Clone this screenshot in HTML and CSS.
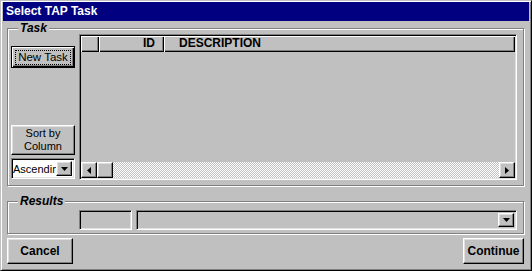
FILE: index.html
```html
<!DOCTYPE html>
<html>

<head>
    <meta charset="utf-8">
    <title>Select TAP Task</title>
    <link rel="stylesheet" href="styles.css">
</head>

<body>
    <div class="window">
        <div class="titlebar">Select TAP Task</div>

        <div class="group group-task">
            <span class="group-label">Task</span>
            <div class="task-side">
                <button class="btn btn-default"><span class="focus">New Task</span></button>
                <div class="side-bottom">
                    <button class="btn btn-sort">Sort by<br>Column</button>
                    <div class="combo combo-white">
                        <span class="combo-text">Ascending</span>
                        <span class="btn combo-arrow">
                            <svg width="7" height="4" viewBox="0 0 7 4"><polygon points="0,0 7,0 3.5,4" fill="#000"/></svg>
                        </span>
                    </div>
                </div>
            </div>
            <div class="listview">
                <div class="lv-header">
                    <div class="lv-col lv-col-blank"></div>
                    <div class="lv-col lv-col-id">ID</div>
                    <div class="lv-col lv-col-desc">DESCRIPTION</div>
                </div>
                <div class="lv-body"></div>
                <div class="hscroll">
                    <span class="btn sb-btn">
                        <svg width="4" height="7" viewBox="0 0 4 7"><polygon points="4,0 4,7 0,3.5" fill="#000"/></svg>
                    </span>
                    <span class="btn sb-btn"></span>
                    <span class="sb-track"></span>
                    <span class="btn sb-btn">
                        <svg width="4" height="7" viewBox="0 0 4 7"><polygon points="0,0 0,7 4,3.5" fill="#000"/></svg>
                    </span>
                </div>
            </div>
        </div>

        <div class="group group-results">
            <span class="group-label">Results</span>
            <div class="field result-id"></div>
            <div class="combo combo-gray">
                <span class="combo-text"></span>
                <span class="btn combo-arrow">
                    <svg width="7" height="4" viewBox="0 0 7 4"><polygon points="0,0 7,0 3.5,4" fill="#000"/></svg>
                </span>
            </div>
        </div>

        <div class="actions">
            <button class="btn btn-action btn-cancel">Cancel</button>
            <button class="btn btn-action btn-continue">Continue</button>
        </div>
    </div>
</body>

</html>
```

FILE: styles.css
```css
html,
body {
    margin: 0;
    padding: 0;
    background: #c0c0c0;
    font-family: "Liberation Sans", Arial, sans-serif;
    font-size: 11px;
}

.window {
    width: 532px;
    height: 271px;
    box-sizing: border-box;
    padding: 1px 2px 2px;
    background: #c0c0c0;
    border: 1px solid;
    border-color: #c0c0c0 #000 #000 #c0c0c0;
    box-shadow: inset 1px 1px #fff, inset -1px -1px #808080;
    display: flex;
    flex-direction: column;
}

.titlebar {
    height: 19px;
    line-height: 19px;
    padding-left: 3px;
    background: #000080;
    color: #fff;
    font-weight: bold;
    font-size: 12px;
}

/* etched group boxes */
.group {
    position: relative;
    border: 1px solid #808080;
    box-shadow: inset 1px 1px #fff, 1px 1px #fff;
    margin: 0 5px 0 4px;
    display: flex;
}

.group-label {
    position: absolute;
    top: -7px;
    left: 10px;
    padding: 0 2px;
    background: #c0c0c0;
    font-size: 12px;
    font-weight: bold;
    font-style: italic;
    line-height: 13px;
}

.group-task {
    margin-top: 7px;
    height: 158px;
    box-sizing: border-box;
    padding: 5px 6px 5px 3px;
    gap: 4px;
}

.group-results {
    margin-top: 15px;
    height: 33px;
    box-sizing: border-box;
    padding: 8px 6px 3px 71px;
    gap: 4px;
}

/* buttons */
.btn {
    box-sizing: border-box;
    margin: 0;
    padding: 0;
    background: #c0c0c0;
    color: #000;
    font-family: inherit;
    font-size: 11px;
    border: 1px solid;
    border-color: #fff #000 #000 #fff;
    box-shadow: inset -1px -1px #808080, inset 1px 1px #dfdfdf;
    display: flex;
    align-items: center;
    justify-content: center;
}

.btn-default {
    height: 22px;
    margin-top: 12px;
    border-color: #000;
    box-shadow: inset 1px 1px #fff, inset -1px -1px #000, inset -2px -2px #808080;
}

.focus {
    display: block;
    flex: 1;
    margin: 0 3px;
    border: 1px dotted #000;
    line-height: 13px;
    font-size: 11.5px;
}

.task-side {
    width: 64px;
    display: flex;
    flex-direction: column;
}

.side-bottom {
    margin-top: auto;
    display: flex;
    flex-direction: column;
    gap: 3px;
    padding-bottom: 1px;
}

.btn-sort {
    height: 30px;
    line-height: 13px;
}

/* combo boxes and fields */
.combo,
.field {
    box-sizing: border-box;
    border: 1px solid;
    border-color: #808080 #fff #fff #808080;
    box-shadow: inset 1px 1px #000, inset -1px -1px #dfdfdf;
    padding: 2px;
    display: flex;
    align-items: center;
}

.combo-white {
    height: 21px;
    padding-left: 1px;
    background: #fff;
}

.combo-gray {
    flex: 1;
    height: 20px;
}

.combo-text {
    flex: 1;
    overflow: hidden;
    white-space: nowrap;
    font-size: 11px;
}

.combo-arrow {
    width: 16px;
    height: 100%;
}

.result-id {
    width: 53px;
    height: 20px;
}

/* list view */
.listview {
    flex: 1;
    box-sizing: border-box;
    border: 1px solid;
    border-color: #808080 #fff #fff #808080;
    box-shadow: inset 1px 1px #000, inset -1px -1px #dfdfdf;
    padding: 1px;
    display: flex;
    flex-direction: column;
}

.lv-header {
    height: 16px;
    display: flex;
}

.lv-col {
    box-sizing: border-box;
    height: 16px;
    line-height: 15px;
    font-weight: bold;
    font-size: 12px;
    box-shadow: inset 1px 1px #fff, inset -1px -1px #000, inset -2px -2px #808080;
}

.lv-col-blank {
    width: 18px;
}

.lv-col-id {
    width: 65px;
    text-align: right;
    padding-right: 9px;
}

.lv-col-desc {
    flex: 1;
    padding-left: 15px;
}

.lv-body {
    flex: 1;
}

.hscroll {
    height: 16px;
    display: flex;
}

.sb-btn {
    width: 16px;
    height: 16px;
}

.sb-track {
    flex: 1;
    background: repeating-conic-gradient(#fff 0 25%, #c0c0c0 0 50%) 0 0 / 2px 2px;
}

/* bottom buttons */
.actions {
    margin: 4px 5px 0 4px;
    display: flex;
    justify-content: space-between;
}

.btn-action {
    height: 26px;
    font-size: 12px;
    font-weight: bold;
}

.btn-cancel {
    width: 66px;
}

.btn-continue {
    width: 61px;
}
```
